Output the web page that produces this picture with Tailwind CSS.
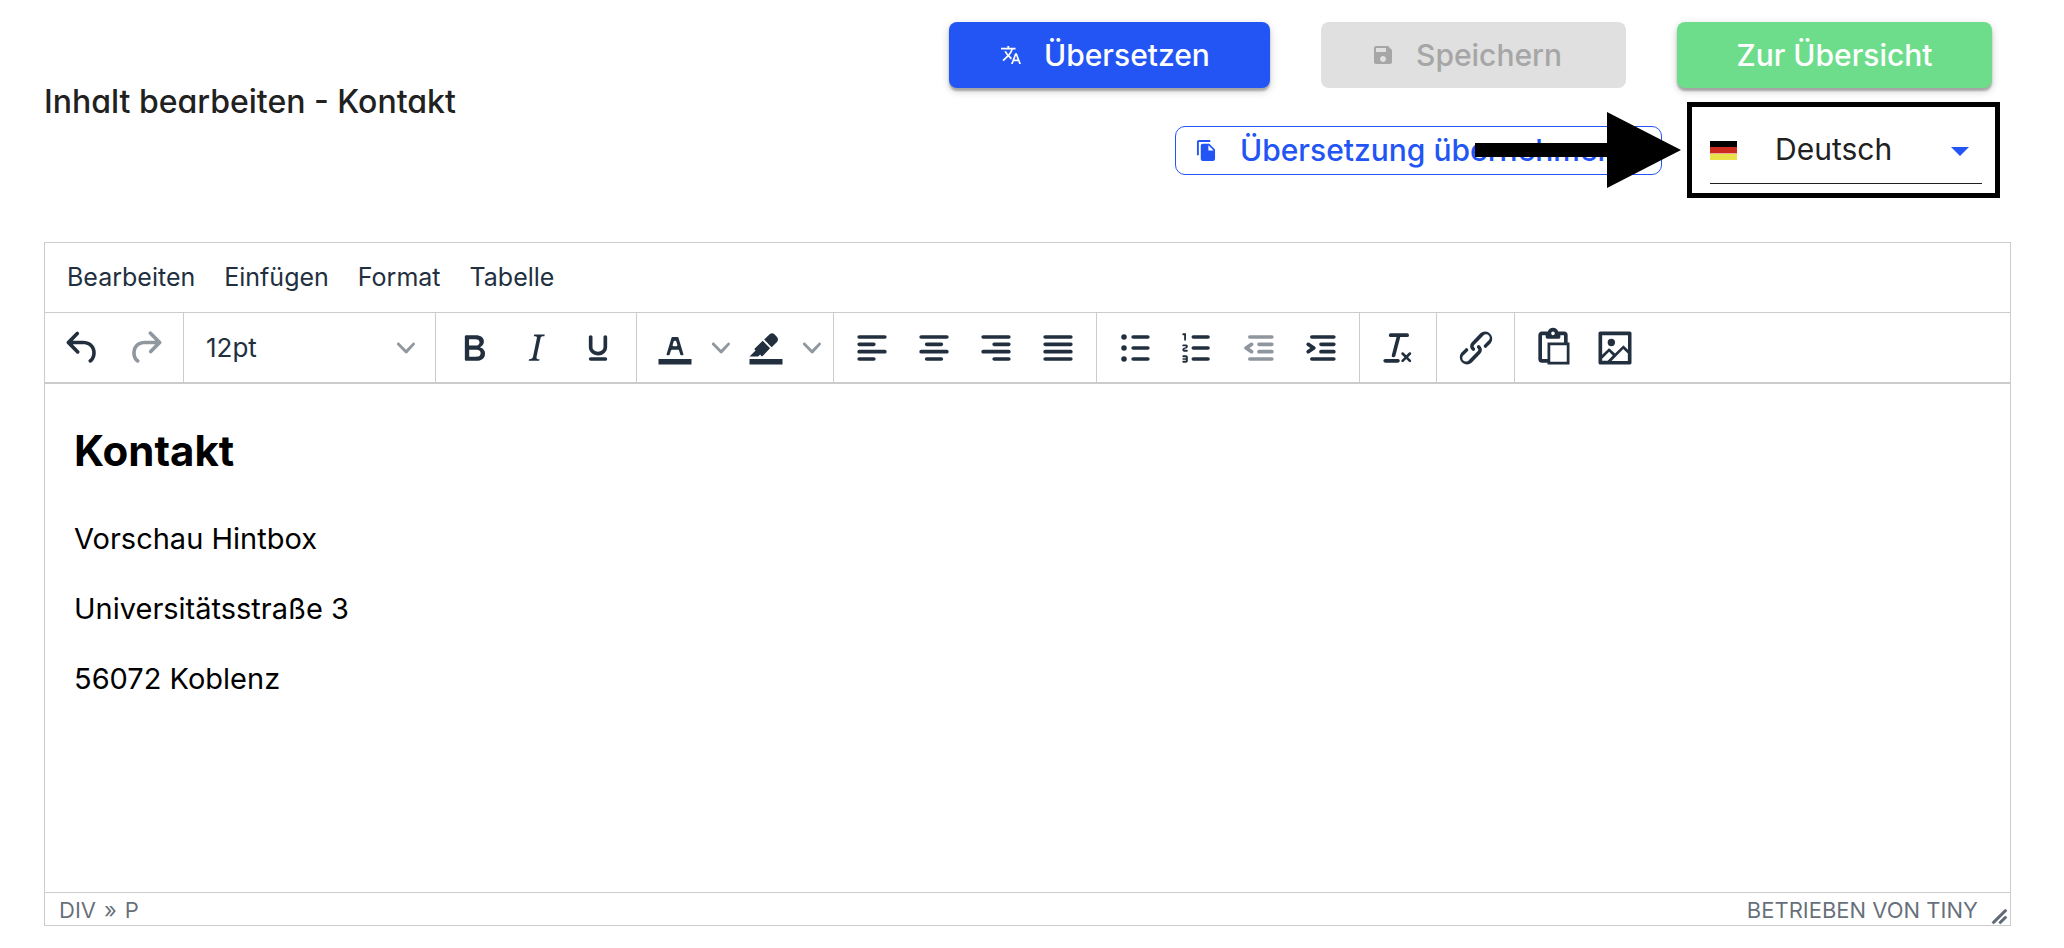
<!DOCTYPE html>
<html lang="de">
<head>
<meta charset="utf-8">
<meta name="viewport" content="width=device-width, initial-scale=1">
<title>Inhalt bearbeiten</title>
<script src="https://cdn.jsdelivr.net/npm/@tailwindcss/browser@4"></script>
</head>
<body class="bg-white font-['Inter',sans-serif] text-[#222f3e]">
<svg class="hidden" aria-hidden="true">
  <symbol id="chevron" viewBox="0 0 10 10"><path d="M8.7 2.2c.3-.3.8-.3 1 0 .4.4.4.9 0 1.2L5.7 7.8c-.3.3-.9.3-1.2 0L.2 3.4a.8.8 0 010-1.2c.3-.3.8-.3 1.1 0L5 6l3.7-3.8z"/></symbol>
</svg>
<div class="flex min-h-screen flex-col pb-[22px]">

  <header class="flex items-start justify-between pl-[44px] pt-[22px] [font-feature-settings:'cv11']">
    <h1 class="mt-[60px] whitespace-nowrap text-[32px] font-medium leading-[40px] text-[#212121]">Inhalt bearbeiten - Kontakt</h1>

    <div class="flex flex-col items-end">
      <div class="flex gap-[51px] pr-[72px] text-[30px] font-medium">
        <button type="button" class="flex h-[66px] w-[321px] items-center gap-[23px] rounded-lg bg-[#2355f5] pl-[52px] text-white shadow-[0_3px_2px_rgba(0,0,0,0.25),0_3px_8px_rgba(0,0,0,0.2)]">
          <svg class="size-[20px]" viewBox="1 2 22 20" fill="currentColor" aria-hidden="true"><path d="M12.87 15.07l-2.54-2.51.03-.03A17.52 17.52 0 0014.07 6H17V4h-7V2H8v2H1v1.99h11.17C11.5 7.92 10.44 9.75 9 11.35 8.07 10.32 7.3 9.19 6.69 8h-2c.73 1.63 1.73 3.17 2.98 4.56l-5.09 5.02L4 19l5-5 3.11 3.11.76-2.04zM18.5 10h-2L12 22h2l1.12-3h4.75L21 22h2l-4.5-12zm-2.62 7l1.62-4.33L19.12 17h-3.24z"/></svg>
          Übersetzen
        </button>
        <button type="button" disabled class="flex h-[66px] w-[305px] items-center gap-[23px] rounded-lg bg-[#e0e0e0] pl-[52px] text-[#a6a6a6]">
          <svg class="size-[20px]" viewBox="2 2 20 20" fill="currentColor" aria-hidden="true"><path d="M17 3H5a2 2 0 00-2 2v14c0 1.1.89 2 2 2h14c1.1 0 2-.9 2-2V7l-4-4zm-5 16c-1.66 0-3-1.34-3-3s1.34-3 3-3 3 1.34 3 3-1.34 3-3 3zm3-10H5V5h10v4z"/></svg>
          Speichern
        </button>
        <button type="button" class="h-[66px] w-[315px] rounded-lg bg-[#6ddd8c] text-white shadow-[0_3px_2px_rgba(0,0,0,0.25),0_3px_8px_rgba(0,0,0,0.2)]">Zur Übersicht</button>
      </div>

      <div class="mt-[14px] flex items-center gap-[25px] pr-[64px]">
        <button type="button" class="flex h-[49px] w-[487px] items-center gap-[24px] whitespace-nowrap rounded-[10px] border border-[#2355f5] pl-[20px] text-[30px] font-medium text-[#2355f5]">
          <svg class="h-[21px] w-[20px]" viewBox="1 1 21 22" fill="currentColor" aria-hidden="true"><path d="M16 1H4c-1.1 0-2 .9-2 2v14h2V3h12V1zm-1 4l6 6v10c0 1.1-.9 2-2 2H7.99C6.89 23 6 22.1 6 21l.01-14c0-1.1.89-2 1.99-2h7zm-1 7h5.5L14 6.500V12z"/></svg>
          Übersetzung übernehmen
        </button>
        <div class="relative h-[96px] w-[313px] border-[5px] border-black pl-[18px] pr-[13px] pt-[18px]">
          <svg class="absolute right-full top-1/2 mr-[11px] h-[76px] w-[206px] -translate-y-1/2" viewBox="0 0 206 76" aria-hidden="true"><path d="M0 31h132V0l74 38-74 38V45H0z"/></svg>
          <div class="relative flex h-[59px] items-center border-b border-[#212121] pb-[8px]">
            <svg class="h-[19px] w-[27px] shrink-0" viewBox="0 0 27 19" aria-hidden="true"><path fill="#eba9a2" d="M0 6h27v8H0z"/><path d="M0 0h27v6H0z"/><path fill="#cc2b1d" d="M0 6h27v6H0z"/><path fill="#e9e24b" d="M0 13h27v6H0z"/></svg>
            <select aria-label="Sprache" class="h-[46px] w-full appearance-none bg-transparent pb-[2px] pl-[38px] text-[30px] text-[#212121] outline-none"><option>Deutsch</option><option>Englisch</option></select>
            <svg class="pointer-events-none absolute right-[13px] top-[22px] h-[9px] w-[18px]" viewBox="0 0 18 9" aria-hidden="true"><path fill="#2355f5" d="M0 0h18L9 9z"/></svg>
          </div>
        </div>
      </div>
    </div>
  </header>

  <main class="ml-[44px] mr-[53px] mt-[44px] flex grow flex-col border border-[#ccc]">
    <nav class="flex h-[70px] items-center gap-[29px] border-b border-[#ccc] px-[22px] text-[25px]" aria-label="Menü">
      <button type="button">Bearbeiten</button>
      <button type="button">Einfügen</button>
      <button type="button">Format</button>
      <button type="button">Tabelle</button>
    </nav>

    <div role="toolbar" aria-label="Formatierung" class="flex h-[71px] border-b-2 border-[#ccc]">
      <div class="flex items-center border-r border-[#ccc] px-[7px]">
        <button type="button" aria-label="Rückgängig" class="flex w-[62px] justify-center"><svg class="size-[44px]" viewBox="0 0 24 24" fill="currentColor"><path d="M6.4 8H12c3.7 0 6.2 2 6.8 5.1.6 2.7-.4 5.6-2.3 6.8a1 1 0 01-1-1.8c1.1-.6 1.8-2.7 1.4-4.6-.5-2.1-2.100-3.500-4.900-3.500H6.400l3.300 3.300a1 1 0 11-1.400 1.400l-5-5a1 1 0 010-1.400l5-5a1 1 0 011.400 1.400L6.400 8z"/></svg></button>
        <button type="button" aria-label="Wiederholen" disabled class="flex w-[62px] justify-center text-[#222f3e]/50"><svg class="size-[44px]" viewBox="0 0 24 24" fill="currentColor"><path d="M17.600 10H12c-2.800 0-4.400 1.400-4.900 3.500-.4 2 .3 4 1.400 4.600a1 1 0 11-1 1.800c-2-1.200-2.900-4.100-2.300-6.800.6-3 3-5.100 6.800-5.100h5.600l-3.300-3.300a1 1 0 111.400-1.400l5 5a1 1 0 010 1.400l-5 5a1 1 0 01-1.400-1.400l3.300-3.300z"/></svg></button>
      </div>
      <div class="flex w-[252px] items-center border-r border-[#ccc] px-[7px]">
        <button type="button" aria-label="Schriftgröße" class="flex w-full items-center justify-between pl-[15px] pr-[13px] text-[26px]">12pt<svg class="size-[18px]" viewBox="0 0 10 10" fill="#222f3e" fill-opacity=".5"><use href="#chevron"/></svg></button>
      </div>
      <div class="flex items-center border-r border-[#ccc] px-[7px]">
        <button type="button" aria-label="Fett" class="flex w-[62px] justify-center"><svg class="size-[44px]" viewBox="0 0 24 24" fill="currentColor"><path d="M7.800 19c-.3 0-.5 0-.6-.2l-.2-.5V5.700c0-.2 0-.4.2-.5l.6-.2h5c1.500 0 2.700.3 3.500 1 .7.6 1.100 1.400 1.100 2.500a3 3 0 01-.6 1.900c-.4.6-1 1-1.600 1.200.4.1.9.3 1.300.6s.8.7 1 1.200c.4.4.5 1 .5 1.600 0 1.300-.4 2.300-1.300 3-.8.7-2.100 1-3.800 1H7.800zm5-8.300c.6 0 1.200-.1 1.600-.5.4-.3.6-.7.6-1.300 0-1.100-.8-1.700-2.300-1.700H9.300v3.500h3.400zm.5 6c.7 0 1.300-.1 1.700-.4.4-.4.6-.9.6-1.500s-.2-1-.7-1.400c-.4-.3-1-.4-2-.4H9.400v3.800h4z"/></svg></button>
        <button type="button" aria-label="Kursiv" class="flex w-[62px] justify-center"><svg class="size-[44px]" viewBox="0 0 24 24" fill="currentColor"><path d="M16.700 4.700l-.1.9h-.3c-.6 0-1 0-1.400.3-.3.3-.4.6-.5 1.100l-2.100 9.800v.6c0 .5.4.8 1.400.8h.2l-.2.8H8l.2-.8h.2c1.100 0 1.800-.5 2-1.500l2-9.800.1-.5c0-.6-.4-.8-1.400-.8h-.3l.2-.9h5.800z"/></svg></button>
        <button type="button" aria-label="Unterstrichen" class="flex w-[62px] justify-center"><svg class="size-[44px]" viewBox="0 0 24 24" fill="currentColor"><path d="M16 5c.6 0 1 .4 1 1v5.500a4 4 0 01-.4 1.800l-1 1.400a5.300 5.300 0 01-5.500 1 5 5 0 01-1.600-1c-.5-.4-.8-.9-1.100-1.400a4 4 0 01-.4-1.800V6c0-.6.4-1 1-1s1 .4 1 1v5.500c0 .3 0 .6.2 1l.6.7a3.300 3.300 0 002.200.8 3.400 3.400 0 002.200-.8c.3-.2.4-.5.6-.8l.2-.9V6c0-.6.4-1 1-1zM8 17h8c.6 0 1 .4 1 1s-.4 1-1 1H8a1 1 0 010-2z"/></svg></button>
      </div>
      <div class="flex items-center border-r border-[#ccc] px-[7px]">
        <button type="button" aria-label="Textfarbe" class="flex w-[62px] justify-center"><svg class="size-[44px]" viewBox="0 0 24 24" fill="currentColor"><path d="M3 18h18v3H3z"/><path fill-rule="evenodd" d="M8.700 16h-.8a.5.5 0 01-.5-.6l2.700-9c.1-.3.3-.4.5-.4h2.800c.2 0 .4.1.5.4l2.700 9a.5.5 0 01-.5.6h-.8a.5.5 0 01-.4-.4l-.7-2.200c0-.3-.3-.4-.5-.4h-3.400c-.2 0-.4.1-.5.4l-.7 2.200c0 .3-.2.4-.4.4zm2.600-7.600l-.6 2a.5.5 0 00.5.6h1.600a.5.5 0 00.5-.6l-.6-2c0-.3-.3-.4-.5-.4h-.4c-.2 0-.4.1-.5.4z"/></svg></button>
        <button type="button" aria-label="Textfarbe wählen" class="flex w-[29px] justify-center"><svg class="size-[18px]" viewBox="0 0 10 10" fill="#222f3e" fill-opacity=".5"><use href="#chevron"/></svg></button>
        <button type="button" aria-label="Hintergrundfarbe" class="flex w-[62px] justify-center"><svg class="size-[44px]" viewBox="0 0 24 24" fill="currentColor"><path d="M3 18h18v3H3z"/><path d="M7.700 16.700H3l3.300-3.300-.7-.8L10.200 8l4 4.100-4 4.200c-.2.2-.6.2-.8 0l-.6-.7-1.100 1.100zm5-7.500L11 7.400l3-2.900a2 2 0 012.600 0L18 6c.7.7.7 2 0 2.700l-2.900 2.900-1.800-1.800-.5-.6"/></svg></button>
        <button type="button" aria-label="Hintergrundfarbe wählen" class="flex w-[29px] justify-center"><svg class="size-[18px]" viewBox="0 0 10 10" fill="#222f3e" fill-opacity=".5"><use href="#chevron"/></svg></button>
      </div>
      <div class="flex items-center border-r border-[#ccc] px-[7px]">
        <button type="button" aria-label="Linksbündig" class="flex w-[62px] justify-center"><svg class="size-[44px]" viewBox="0 0 24 24" stroke="currentColor" stroke-width="2" stroke-linecap="round"><path d="M5 6h14M5 10h8M5 14h14M5 18h8"/></svg></button>
        <button type="button" aria-label="Zentriert" class="flex w-[62px] justify-center"><svg class="size-[44px]" viewBox="0 0 24 24" stroke="currentColor" stroke-width="2" stroke-linecap="round"><path d="M5 6h14M8 10h8M5 14h14M8 18h8"/></svg></button>
        <button type="button" aria-label="Rechtsbündig" class="flex w-[62px] justify-center"><svg class="size-[44px]" viewBox="0 0 24 24" stroke="currentColor" stroke-width="2" stroke-linecap="round"><path d="M5 6h14M11 10h8M5 14h14M11 18h8"/></svg></button>
        <button type="button" aria-label="Blocksatz" class="flex w-[62px] justify-center"><svg class="size-[44px]" viewBox="0 0 24 24" stroke="currentColor" stroke-width="2" stroke-linecap="round"><path d="M5 6h14M5 10h14M5 14h14M5 18h14"/></svg></button>
      </div>
      <div class="flex items-center border-r border-[#ccc] px-[7px]">
        <button type="button" aria-label="Aufzählung" class="flex w-[62px] justify-center"><svg class="size-[44px]" viewBox="0 0 24 24" fill="currentColor"><path stroke="currentColor" stroke-width="2" stroke-linecap="round" d="M11 6h8M11 12h8M11 18h8"/><circle cx="6" cy="6" r="1.5"/><circle cx="6" cy="12" r="1.5"/><circle cx="6" cy="18" r="1.5"/></svg></button>
        <button type="button" aria-label="Nummerierte Liste" class="flex w-[62px] justify-center"><svg class="size-[44px]" viewBox="0 0 24 24" fill="currentColor"><path stroke="currentColor" stroke-width="2" stroke-linecap="round" d="M10 6h8M10 12h8M10 18h8"/><path d="M6 4v3.500c0 .3-.2.5-.5.5a.5.5 0 01-.5-.5V5h-.5a.5.5 0 010-1H6zm-1 8.800l.2.2h1.300c.3 0 .5.2.5.5s-.2.5-.5.5H4.900a1 1 0 01-.9-1V13c0-.4.3-.8.6-1l1.200-.4.2-.3a.2.2 0 00-.2-.2H4.500a.5.5 0 01-.5-.5c0-.3.2-.5.5-.5h1.600c.5 0 .9.4.9 1v.1c0 .4-.3.8-.6 1l-1.200.4-.2.3zM7 17v2c0 .6-.4 1-1 1H4.500a.5.5 0 010-1h1.200c.2 0 .3-.1.3-.3 0-.2-.1-.3-.3-.3H4.400a.4.4 0 110-.8h1.300c.2 0 .3-.1.3-.3 0-.2-.1-.3-.3-.3H4.500a.5.5 0 110-1H6c.6 0 1 .4 1 1z"/></svg></button>
        <button type="button" aria-label="Einzug verkleinern" disabled class="flex w-[62px] justify-center text-[#222f3e]"><svg class="size-[44px] opacity-50" viewBox="0 0 24 24" fill="currentColor"><path stroke="currentColor" stroke-width="2" stroke-linecap="round" d="M7 6h12M12 10h7M12 14h7M7 18h12"/><path d="M8.600 13.200a1 1 0 01-1.200 1.600l-3-2a1 1 0 010-1.600l3-2a1 1 0 011.200 1.600L6.800 12l1.800 1.200z"/></svg></button>
        <button type="button" aria-label="Einzug vergrößern" class="flex w-[62px] justify-center"><svg class="size-[44px]" viewBox="0 0 24 24" fill="currentColor"><path stroke="currentColor" stroke-width="2" stroke-linecap="round" d="M7 6h12M12 10h7M12 14h7M7 18h12"/><path d="M4.400 13.200L6.200 12l-1.800-1.200a1 1 0 011.200-1.600l3 2a1 1 0 010 1.600l-3 2a1 1 0 11-1.200-1.600z"/></svg></button>
      </div>
      <div class="flex items-center border-r border-[#ccc] px-[7px]">
        <button type="button" aria-label="Formatierung entfernen" class="flex w-[62px] justify-center"><svg class="size-[44px]" viewBox="0 0 24 24" fill="currentColor"><path d="M13.200 6a1 1 0 010 .2l-2.600 10a1 1 0 01-1 .8h-.2a.8.8 0 01-.8-1l2.600-10H8a1 1 0 110-2h9a1 1 0 010 2h-3.800zM5 18h7a1 1 0 010 2H5a1 1 0 010-2zm13 1.500L16.500 18 15 19.500a.7.7 0 01-1-1l1.500-1.500-1.500-1.500a.7.7 0 011-1l1.500 1.500 1.500-1.500a.7.7 0 011 1L17.500 17l1.500 1.500a.7.7 0 01-1 1z"/></svg></button>
      </div>
      <div class="flex items-center border-r border-[#ccc] px-[7px]">
        <button type="button" aria-label="Link einfügen" class="flex w-[63px] justify-center"><svg class="size-[44px]" viewBox="0 0 24 24" fill="currentColor"><path d="M6.200 12.300a1 1 0 011.400 1.400l-2.100 2a2 2 0 102.700 2.800l4.800-4.800a1 1 0 000-1.400 1 1 0 111.400-1.300 2.900 2.900 0 010 4L9.600 20a3.900 3.900 0 01-5.500-5.500l2-2zm11.600-.6a1 1 0 01-1.400-1.400l2-2a2 2 0 10-2.600-2.800L11 10.300a1 1 0 000 1.400A1 1 0 119.600 13a2.900 2.900 0 010-4L14.400 4a3.900 3.900 0 015.500 5.500l-2 2z"/></svg></button>
      </div>
      <div class="flex items-center px-[7px]">
        <button type="button" aria-label="Einfügen" class="flex w-[62px] justify-center"><svg class="size-[44px]" viewBox="0 0 24 24" fill="currentColor" fill-rule="evenodd"><path d="M18 9V5h-2v1c0 .6-.4 1-1 1H9a1 1 0 01-1-1V5H6v13h3V9h9zM9 20H6a2 2 0 01-2-2V5c0-1.100.9-2 2-2h3.200A3 3 0 0112 1a3 3 0 012.800 2H18a2 2 0 012 2v4h1v12H9v-1zm1.500-9.500v9h9v-9h-9zM12 3a1 1 0 00-1 1c0 .5.4 1 1 1s1-.5 1-1-.4-1-1-1z"/></svg></button>
        <button type="button" aria-label="Bild einfügen" class="flex w-[62px] justify-center"><svg class="size-[44px]" viewBox="0 0 24 24" fill="currentColor" fill-rule="evenodd"><path d="M5 15.700l3.300-3.200c.3-.3.7-.3 1 0L12 15l4.100-4c.3-.4.8-.4 1 0l2 1.900V5H5v10.700zM5 18V19h3l2.800-2.900-2-2L5 17.900zm14-3l-2.500-2.400-6.400 6.500H19v-4zM4 3h16c.6 0 1 .4 1 1v16c0 .6-.4 1-1 1H4a1 1 0 01-1-1V4c0-.6.4-1 1-1z"/><circle cx="10" cy="9" r="2"/></svg></button>
      </div>
    </div>

    <div contenteditable="true" class="grow px-[29px] pt-[37px] text-[29px] leading-[40px] text-black outline-none">
      <h2 class="text-[42px] font-bold leading-[60px]">Kontakt</h2>
      <p class="mt-[38px]">Vorschau Hintbox</p>
      <p class="mt-[30px]">Universitätsstraße 3</p>
      <p class="mt-[30px]">56072 Koblenz</p>
    </div>

    <footer class="flex h-[33px] items-center border-t border-[#ccc] pl-[14px] pr-[2px] pt-[2px] text-[22px] text-[#222f3e]/70">
      <span class="flex gap-[8px]"><span>DIV</span><span>»</span><span>P</span></span>
      <a href="#" class="ml-auto mr-[13px]">BETRIEBEN VON TINY</a>
      <svg class="size-[17px] self-end" viewBox="0 0 10 10" fill="currentColor" stroke="currentColor" stroke-width=".4" aria-hidden="true"><path d="M8.100 1.100A.5.5 0 119 2l-7 7A.5.5 0 111 8l7-7zM8.100 5.100A.5.5 0 119 6l-3 3A.5.5 0 115 8l3-3z"/></svg>
    </footer>
  </main>
</div>
</body>
</html>
